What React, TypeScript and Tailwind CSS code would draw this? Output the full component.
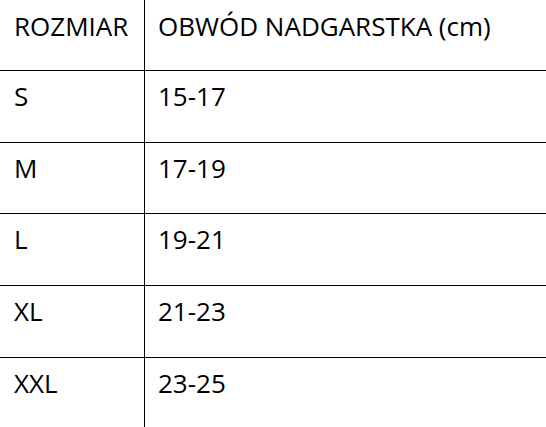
const rows: [string, string][] = [
  ['S', '15-17'],
  ['M', '17-19'],
  ['L', '19-21'],
  ['XL', '21-23'],
  ['XXL', '23-25'],
];

const heights = ['h-[72px]', 'h-[71px]', 'h-[72px]', 'h-[72px]', 'h-[71px]'];

export default function App() {
  return (
    <div
      className="w-[546px] h-[427px] bg-white text-black overflow-hidden text-[26px] leading-[35px]"
      style={{ fontFamily: '"Open Sans", "Liberation Sans", sans-serif' }}
    >
      <div className="flex h-[70px]">
        <div className="w-[145px] shrink-0 border-r border-black pl-[14px] pt-[9px]">ROZMIAR</div>
        <div className="flex-1 pl-[13px] pt-[9px] whitespace-nowrap">OBWÓD NADGARSTKA (cm)</div>
      </div>
      {rows.map(([size, range], i) => (
        <div key={size} className={`flex border-t border-black ${heights[i]}`}>
          <div className="w-[145px] shrink-0 border-r border-black pl-[14px] pt-[8px]">{size}</div>
          <div className="flex-1 pl-[13px] pt-[8px]">{range}</div>
        </div>
      ))}
    </div>
  );
}
